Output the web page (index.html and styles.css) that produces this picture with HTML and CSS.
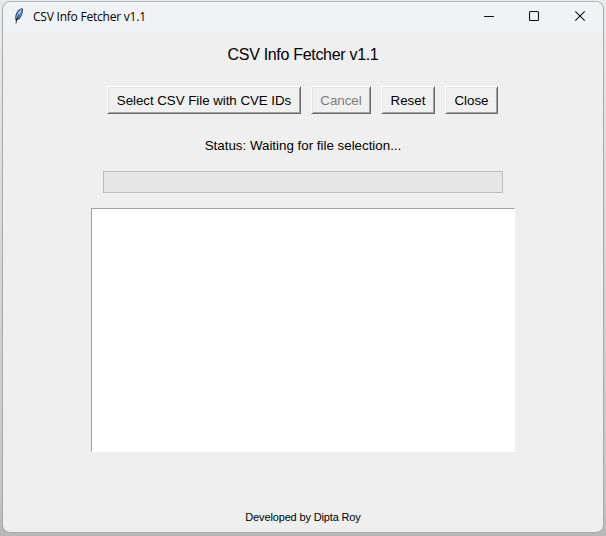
FILE: index.html
```html
<!DOCTYPE html>
<html lang="en">
<head>
<meta charset="utf-8">
<title>CSV Info Fetcher v1.1</title>
<link rel="stylesheet" href="styles.css">
</head>
<body>
<div class="window">
  <header class="titlebar">
    <svg class="feather" width="12" height="18" viewBox="0 0 12 18">
      <path d="M3 14C1.500 11 2.500 6.500 5 3.500C6.500 2 8.500 1.200 9.800 1.200C10.300 4.500 9 9.500 6.500 12L3.500 13.500Z" fill="#27364c"/>
      <path d="M3.300 12C2.900 8 5 4 8.900 2C8.500 5.500 6.500 8.800 3.300 12Z" fill="#a3caf5"/>
      <path d="M4 12.300C6.300 9 8.200 6 9.200 2.200C9.800 6.500 8 10.500 4 12.300Z" fill="#4a8ee6"/>
      <path d="M3 16.500L3.800 11.500L6 7" fill="none" stroke="#111" stroke-width="0.800"/>
    </svg>
    <span class="caption">CSV Info Fetcher v1.1</span>
    <div class="controls">
      <svg width="45" height="30" viewBox="0 0 45 30"><path d="M13 14.500H23" stroke="#111"/></svg>
      <svg width="45" height="30" viewBox="0 0 45 30"><rect x="13.500" y="9.500" width="9" height="9" rx="1" fill="none" stroke="#111" stroke-width="1.100"/></svg>
      <svg width="42" height="30" viewBox="0 0 42 30"><path d="M14.300 9.300L23.700 18.700M23.700 9.300L14.300 18.700" stroke="#111" stroke-width="1.100"/></svg>
    </div>
  </header>
  <main class="content">
    <h1 class="heading">CSV Info Fetcher v1.1</h1>
    <div class="buttons">
      <button class="btn select">Select CSV File with CVE IDs</button>
      <button class="btn cancel" disabled>Cancel</button>
      <button class="btn reset">Reset</button>
      <button class="btn close">Close</button>
    </div>
    <p class="status">Status: Waiting for file selection...</p>
    <div class="progress"></div>
    <div class="output"></div>
    <footer class="credit">Developed by Dipta Roy</footer>
  </main>
</div>
</body>
</html>
```
FILE: styles.css
```css
* { box-sizing: border-box; }
html { height: 100%; }
body {
  margin: 0;
  height: 536px;
  padding: 1px 2px 3px;
  overflow: hidden;
  background: linear-gradient(#ebebeb, #d4d4d4 50%, #c6c6c6 92%, #b8b8b8);
  font-family: "Liberation Sans", Arial, sans-serif;
  color: #000;
}
.window {
  height: 532px;
  border: 1px solid #a9a9a9;
  border-top-color: #b5b5b5;
  border-radius: 8px;
  overflow: hidden;
  background: #efefef;
}
.titlebar {
  display: flex;
  align-items: center;
  height: 30px;
  padding-left: 10px;
  background: #f0f2f5;
}
.feather { display: block; margin: -2px 8px 0 0; }
.caption {
  font: 12px/16px "Open Sans", "Noto Sans", sans-serif;
  letter-spacing: -0.22px;
}
.controls { display: flex; margin-left: auto; }
.controls svg { display: block; }
.content {
  display: flex;
  flex-direction: column;
  align-items: center;
}
.heading {
  margin: 13px 0 0;
  font-size: 16px;
  font-weight: 400;
  line-height: 20px;
  letter-spacing: -0.31px;
}
.buttons { display: flex; gap: 10px; margin: 21px 2px 0 0; }
.btn {
  height: 28px;
  padding: 2px 0 0 1px;
  border: 1px solid;
  border-color: #fff #696969 #696969 #fff;
  box-shadow: inset 1px 1px #e3e3e3, inset -1px -1px #a0a0a0;
  background: #f0f0f0;
  color: #000;
  font: 13.33px/18px "Liberation Sans", Arial, sans-serif;
  white-space: nowrap;
}
.select { width: 194px; letter-spacing: -0.04px; }
.cancel { width: 60px; color: #7c7c7c; }
.reset { width: 54px; }
.close { width: 53px; }
.status {
  margin: 22px 0 0;
  font-size: 13.33px;
  line-height: 20px;
}
.progress {
  width: 400px;
  height: 22px;
  margin-top: 15px;
  border: 1px solid #bcbcbc;
  background: #e6e6e6;
}
.output {
  width: 424px;
  height: 244px;
  margin-top: 15px;
  border: 1px solid;
  border-color: #a0a0a0 #fff #fff #a0a0a0;
  background: #fff;
}
.credit {
  margin-top: 57px;
  font-size: 11px;
  line-height: 16px;
  letter-spacing: -0.15px;
}
```
